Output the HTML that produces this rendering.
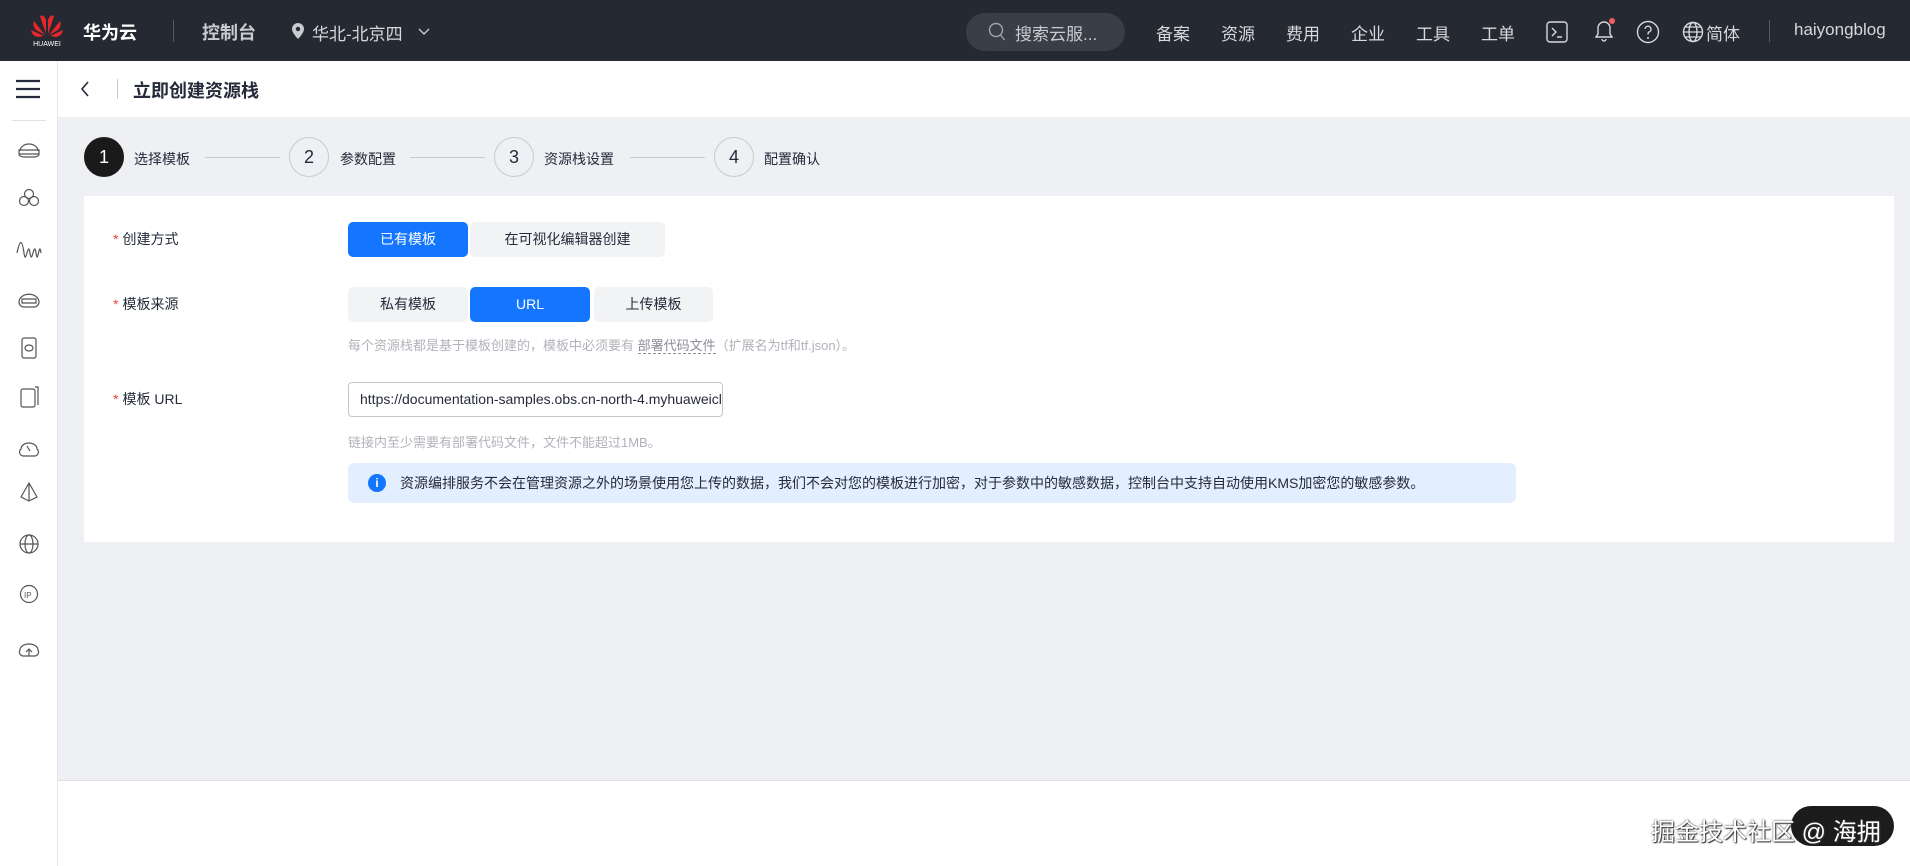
<!DOCTYPE html>
<html><head><meta charset="utf-8"><style>
*{box-sizing:border-box;margin:0;padding:0}
body{width:1910px;height:866px;overflow:hidden;background:#eef0f3;font-family:"Liberation Sans","Noto Sans CJK SC",sans-serif;position:relative;color:#252b3a}
.abs{position:absolute}
#hdr{left:0;top:0;width:1910px;height:61px;background:#252931;color:#d6d8dc;font-size:17px}
#hdr .t{position:absolute;top:20px;white-space:nowrap}
#side{left:0;top:61px;width:58px;height:805px;background:#fff;border-right:1px solid #e4e6ea}
#title{left:58px;top:61px;width:1852px;height:56px;background:#fff}
.step{position:absolute;top:137px;width:40px;height:40px;border-radius:50%;border:1px solid #c8cad0;text-align:center;line-height:38px;font-size:18px;color:#252b3a;background:#eef0f3}
.sl{position:absolute;top:149px;font-size:14px}
.line{position:absolute;top:157px;height:1px;background:#c8cad0}
#card{left:84px;top:196px;width:1810px;height:346px;background:#fff}
.lab{position:absolute;left:113px;font-size:14px;color:#252b3a}
.lab b{color:#e54545;font-weight:normal;margin-right:4px}
.btn{position:absolute;height:35px;line-height:35px;text-align:center;font-size:14px;background:#f2f3f5;color:#252b3a;border-radius:5px}
.btn.on{background:#1476ff;color:#fff}
.hint{position:absolute;font-size:13px;color:#b0b3ba;white-space:nowrap}
#foot{left:58px;top:780px;width:1852px;height:86px;background:#fff;border-top:1px solid #dfe1e5}
.si{position:absolute;left:17px}
</style></head><body>
<div id="hdr" class="abs">
  <svg class="abs" style="left:30px;top:12px" width="34" height="36" viewBox="0 0 34 36">
    <g fill="#e8262b"><path d="M16 22 L10 4 Q14 2 16 8Z"/><path d="M18 22 L24 4 Q20 2 18 8Z"/><path d="M15 23 L4 9 Q2 14 6 18Z"/><path d="M19 23 L30 9 Q32 14 28 18Z"/><path d="M14 24 L1 18 Q2 24 8 25Z"/><path d="M20 24 L33 18 Q32 24 26 25Z"/></g>
    <text x="17" y="34" font-size="7" fill="#fff" text-anchor="middle" font-family="Liberation Sans">HUAWEI</text>
  </svg>
  <span class="t" style="left:83px;font-weight:bold;color:#fff;font-size:18px;top:19px">华为云</span>
  <div class="abs" style="left:173px;top:20px;width:1px;height:22px;background:#555a63"></div>
  <span class="t" style="left:202px;font-weight:bold;font-size:18px;top:19px;color:#c8cbd0">控制台</span>
  <svg class="abs" style="left:291px;top:22px" width="14" height="18" viewBox="0 0 14 18"><path d="M7 1a6 6 0 0 1 6 6c0 4-6 10-6 10S1 11 1 7a6 6 0 0 1 6-6z" fill="#c8cbd0"/><circle cx="7" cy="7" r="2.2" fill="#252931"/></svg>
  <span class="t" style="left:312px">华北-北京四</span>
  <svg class="abs" style="left:418px;top:28px" width="12" height="8"><path d="M1 1l5 5 5-5" stroke="#c8cbd0" fill="none" stroke-width="1.4"/></svg>
  <div class="abs" style="left:966px;top:13px;width:159px;height:38px;border-radius:19px;background:#3a3e46"></div>
  <svg class="abs" style="left:988px;top:22px" width="18" height="20"><circle cx="8" cy="8" r="6.5" stroke="#a0a4ab" fill="none" stroke-width="1.4"/><path d="M12.5 13l4 5" stroke="#a0a4ab" stroke-width="1.4"/></svg>
  <span class="t" style="left:1015px;color:#c8cbd0">搜索云服...</span>
  <span class="t" style="left:1156px">备案</span><span class="t" style="left:1221px">资源</span><span class="t" style="left:1286px">费用</span><span class="t" style="left:1351px">企业</span><span class="t" style="left:1416px">工具</span><span class="t" style="left:1481px">工单</span>
  <svg class="abs" style="left:1546px;top:21px" width="22" height="22"><rect x="1" y="1" width="20" height="20" rx="3" stroke="#d6d8dc" fill="none" stroke-width="1.4"/><path d="M6 7l4 4-4 4M11 16h5" stroke="#d6d8dc" fill="none" stroke-width="1.4"/></svg>
  <svg class="abs" style="left:1592px;top:18px" width="24" height="26"><path d="M4 19h16l-2-3v-6a6 6 0 0 0-12 0v6z M10 21a2 2 0 0 0 4 0" stroke="#d6d8dc" fill="none" stroke-width="1.4"/><circle cx="20" cy="3" r="3" fill="#f25c5c"/></svg>
  <svg class="abs" style="left:1636px;top:20px" width="24" height="24"><circle cx="12" cy="12" r="10.5" stroke="#d6d8dc" fill="none" stroke-width="1.4"/><path d="M9 9a3 3 0 1 1 4 3c-1 .5-1 1.5-1 2.5" stroke="#d6d8dc" fill="none" stroke-width="1.4"/><circle cx="12" cy="18" r="1" fill="#d6d8dc"/></svg>
  <svg class="abs" style="left:1682px;top:21px" width="22" height="22"><circle cx="11" cy="11" r="9.5" stroke="#d6d8dc" fill="none" stroke-width="1.4"/><ellipse cx="11" cy="11" rx="4" ry="9.5" stroke="#d6d8dc" fill="none" stroke-width="1.4"/><path d="M1.5 11h19M3 6h16M3 16h16" stroke="#d6d8dc" stroke-width="1.2"/></svg>
  <span class="t" style="left:1706px">简体</span>
  <div class="abs" style="left:1769px;top:20px;width:1px;height:22px;background:#555a63"></div>
  <span class="t" style="left:1794px">haiyongblog</span>
</div>
<div id="side" class="abs">
  <svg class="abs" style="left:16px;top:18px" width="24" height="20"><path d="M0 2h24M0 10h24M0 18h24" stroke="#252b3a" stroke-width="2.2"/></svg>
  <div class="abs" style="left:12px;top:59px;width:34px;height:1px;background:#dfe1e5"></div>
  <svg class="abs" style="left:15px;top:76px" width="28" height="540" viewBox="0 0 28 540" fill="none" stroke="#555" stroke-width="1.2">
    <path d="M5 14a9 7 0 0 1 18 0M4 13h20v4H4z M4 17a5 3 0 0 0 5 3h10a5 3 0 0 0 5-3"/>
    <circle cx="14" cy="57" r="4.5"/><circle cx="9" cy="64" r="4.5"/><circle cx="19" cy="64" r="4.5"/>
    <path d="M2 116c3-14 5-14 7 0s4-14 6 0 4-14 6 0 3-14 5 0"/>
    <path d="M4 165a9 7 0 0 1 20 0a5 5 0 0 1-5 5H9a5 5 0 0 1-5-5zM7 162h14v4H7z"/>
    <rect x="7" y="201" width="14" height="20" rx="2"/><ellipse cx="14" cy="211" rx="4" ry="3"/>
    <rect x="6" y="252" width="14" height="18" rx="2"/><path d="M20 250h3v18"/>
    <path d="M6 312a8 6 0 0 1 16 0a4 4 0 0 1-2 7H8a4 4 0 0 1-2-7zM12 309l3 5"/>
    <path d="M14 346l-8 14 8 4 8-4z M14 346v18"/>
    <circle cx="14" cy="407" r="9"/><ellipse cx="14" cy="407" rx="4" ry="9"/><path d="M5 407h18"/>
    <circle cx="14" cy="457" r="8.5"/><text x="9" y="461" font-size="8" fill="#555" stroke="none">IP</text>
    <path d="M5 513a9 6 0 0 1 18 0a4 4 0 0 1-3 6H8a4 4 0 0 1-3-6zM14 519v-6M11 515l3-3 3 3"/>
  </svg>
</div>
<div id="title" class="abs">
  <svg class="abs" style="left:22px;top:20px" width="10" height="16"><path d="M8 1L2 8l6 7" stroke="#252b3a" fill="none" stroke-width="1.6"/></svg>
  <div class="abs" style="left:59px;top:18px;width:1px;height:20px;background:#c8cad0"></div>
  <span class="abs" style="left:75px;top:16px;font-size:18px;font-weight:bold">立即创建资源栈</span>
</div>
<div class="step" style="left:84px;background:#1a1a1a;color:#fff;border-color:#1a1a1a">1</div>
<span class="sl" style="left:134px">选择模板</span>
<div class="line" style="left:205px;width:75px"></div>
<div class="step" style="left:289px">2</div>
<span class="sl" style="left:340px">参数配置</span>
<div class="line" style="left:410px;width:75px"></div>
<div class="step" style="left:494px">3</div>
<span class="sl" style="left:544px">资源栈设置</span>
<div class="line" style="left:630px;width:75px"></div>
<div class="step" style="left:714px">4</div>
<span class="sl" style="left:764px">配置确认</span>
<div id="card" class="abs"></div>
<span class="lab" style="top:229px"><b>*</b>创建方式</span>
<div class="btn on" style="left:348px;top:222px;width:120px">已有模板</div>
<div class="btn" style="left:470px;top:222px;width:195px">在可视化编辑器创建</div>
<span class="lab" style="top:294px"><b>*</b>模板来源</span>
<div class="btn" style="left:348px;top:287px;width:120px">私有模板</div>
<div class="btn on" style="left:470px;top:287px;width:120px">URL</div>
<div class="btn" style="left:594px;top:287px;width:119px">上传模板</div>
<span class="hint" style="left:348px;top:335px">每个资源栈都是基于模板创建的，模板中必须要有 <span style="color:#8a8e99;border-bottom:1px dashed #8a8e99">部署代码文件</span>（扩展名为tf和tf.json）。</span>
<span class="lab" style="top:389px"><b>*</b>模板 URL</span>
<div class="abs" style="left:348px;top:382px;width:375px;height:35px;border:1px solid #c2c5cc;border-radius:4px;font-size:14px;line-height:33px;padding-left:11px;overflow:hidden;white-space:nowrap">https://documentation-samples.obs.cn-north-4.myhuaweicloud.com</div>
<span class="hint" style="left:348px;top:432px">链接内至少需要有部署代码文件，文件不能超过1MB。</span>
<div class="abs" style="left:348px;top:463px;width:1168px;height:40px;background:#e3eefe;border-radius:6px;font-size:14px;line-height:40px;padding-left:52px;color:#252b3a;white-space:nowrap">资源编排服务不会在管理资源之外的场景使用您上传的数据，我们不会对您的模板进行加密，对于参数中的敏感数据，控制台中支持自动使用KMS加密您的敏感参数。</div>
<div class="abs" style="left:368px;top:474px;width:18px;height:18px;border-radius:50%;background:#1476ff;color:#fff;font-size:12px;line-height:18px;text-align:center;font-weight:bold">i</div>
<div id="foot" class="abs"></div>
<div class="abs" style="left:1791px;top:806px;width:103px;height:40px;border-radius:20px;background:#1c1c1c"></div>
<span class="abs" style="left:1651px;top:812px;font-size:24px;color:#fff;text-shadow:0 0 2px #333,1px 1px 1px #333;white-space:nowrap">掘金技术社区 @ 海拥</span>
</body></html>
